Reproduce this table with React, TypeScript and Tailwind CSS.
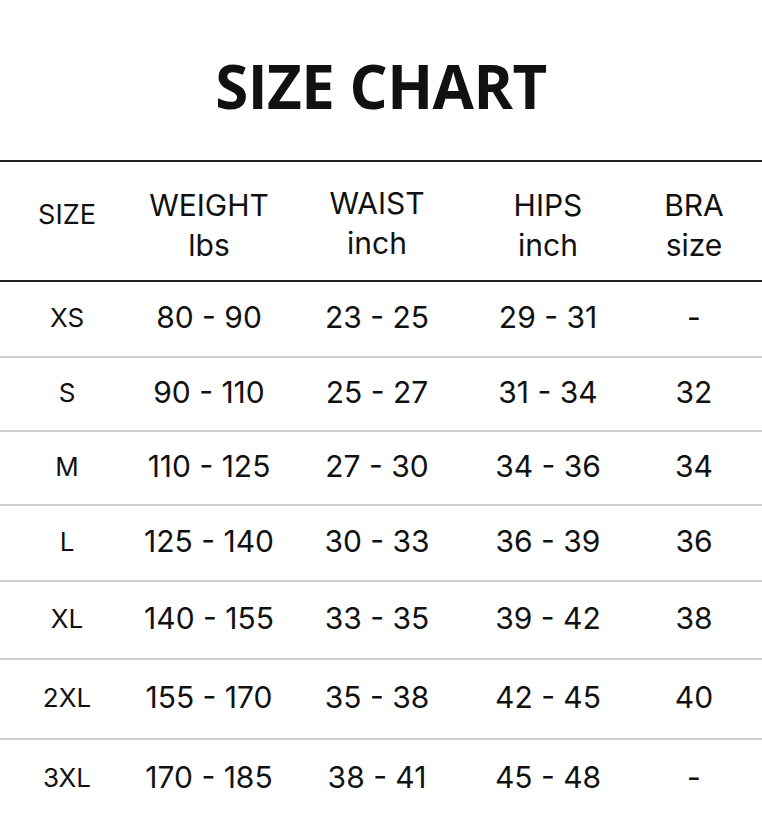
import React from 'react';

const rows = [
  { size: 'XS', weight: '80 - 90', waist: '23 - 25', hips: '29 - 31', bra: '-', h: 'h-[74px]' },
  { size: 'S', weight: '90 - 110', waist: '25 - 27', hips: '31 - 34', bra: '32', h: 'h-[74px]' },
  { size: 'M', weight: '110 - 125', waist: '27 - 30', hips: '34 - 36', bra: '34', h: 'h-[74px]' },
  { size: 'L', weight: '125 - 140', waist: '30 - 33', hips: '36 - 39', bra: '36', h: 'h-[76px]' },
  { size: 'XL', weight: '140 - 155', waist: '33 - 35', hips: '39 - 42', bra: '38', h: 'h-[78px]' },
  { size: '2XL', weight: '155 - 170', waist: '35 - 38', hips: '42 - 45', bra: '40', h: 'h-[80px]' },
  { size: '3XL', weight: '170 - 185', waist: '38 - 41', hips: '45 - 48', bra: '-', h: 'h-[80px]' },
];

const cols = 'grid grid-cols-[134px_150px_186px_156px_136px] items-center text-center';

const App: React.FC = () => {
  return (
    <div className="w-[762px] h-[818px] bg-white text-[#111] overflow-hidden font-['Inter',sans-serif]">
      <div className="h-[160px] flex items-center justify-center pt-[12px]">
        <h1 className="font-['Open_Sans',sans-serif] font-bold text-[60px] leading-none tracking-[-0.5px]">
          SIZE CHART
        </h1>
      </div>

      <div className="border-t-2 border-b-2 border-[#222]">
        <div className={`${cols} h-[118px] pt-[8px] text-[30px] leading-[40px]`}>
          <div className="text-[27px] -mt-[20px]">SIZE</div>
          <div>WEIGHT<br />lbs</div>
          <div className="-mt-[5px]">WAIST<br />inch</div>
          <div>HIPS<br />inch</div>
          <div>BRA<br />size</div>
        </div>
      </div>

      {rows.map((r, i) => (
        <div
          key={r.size}
          className={`${cols} ${r.h} pb-[4px] text-[30px] ${i > 0 ? 'border-t-2 border-[#cfcfcf]' : ''}`}
        >
          <div className="text-[26px]">{r.size}</div>
          <div>{r.weight}</div>
          <div>{r.waist}</div>
          <div>{r.hips}</div>
          <div>{r.bra}</div>
        </div>
      ))}
    </div>
  );
};

export default App;
